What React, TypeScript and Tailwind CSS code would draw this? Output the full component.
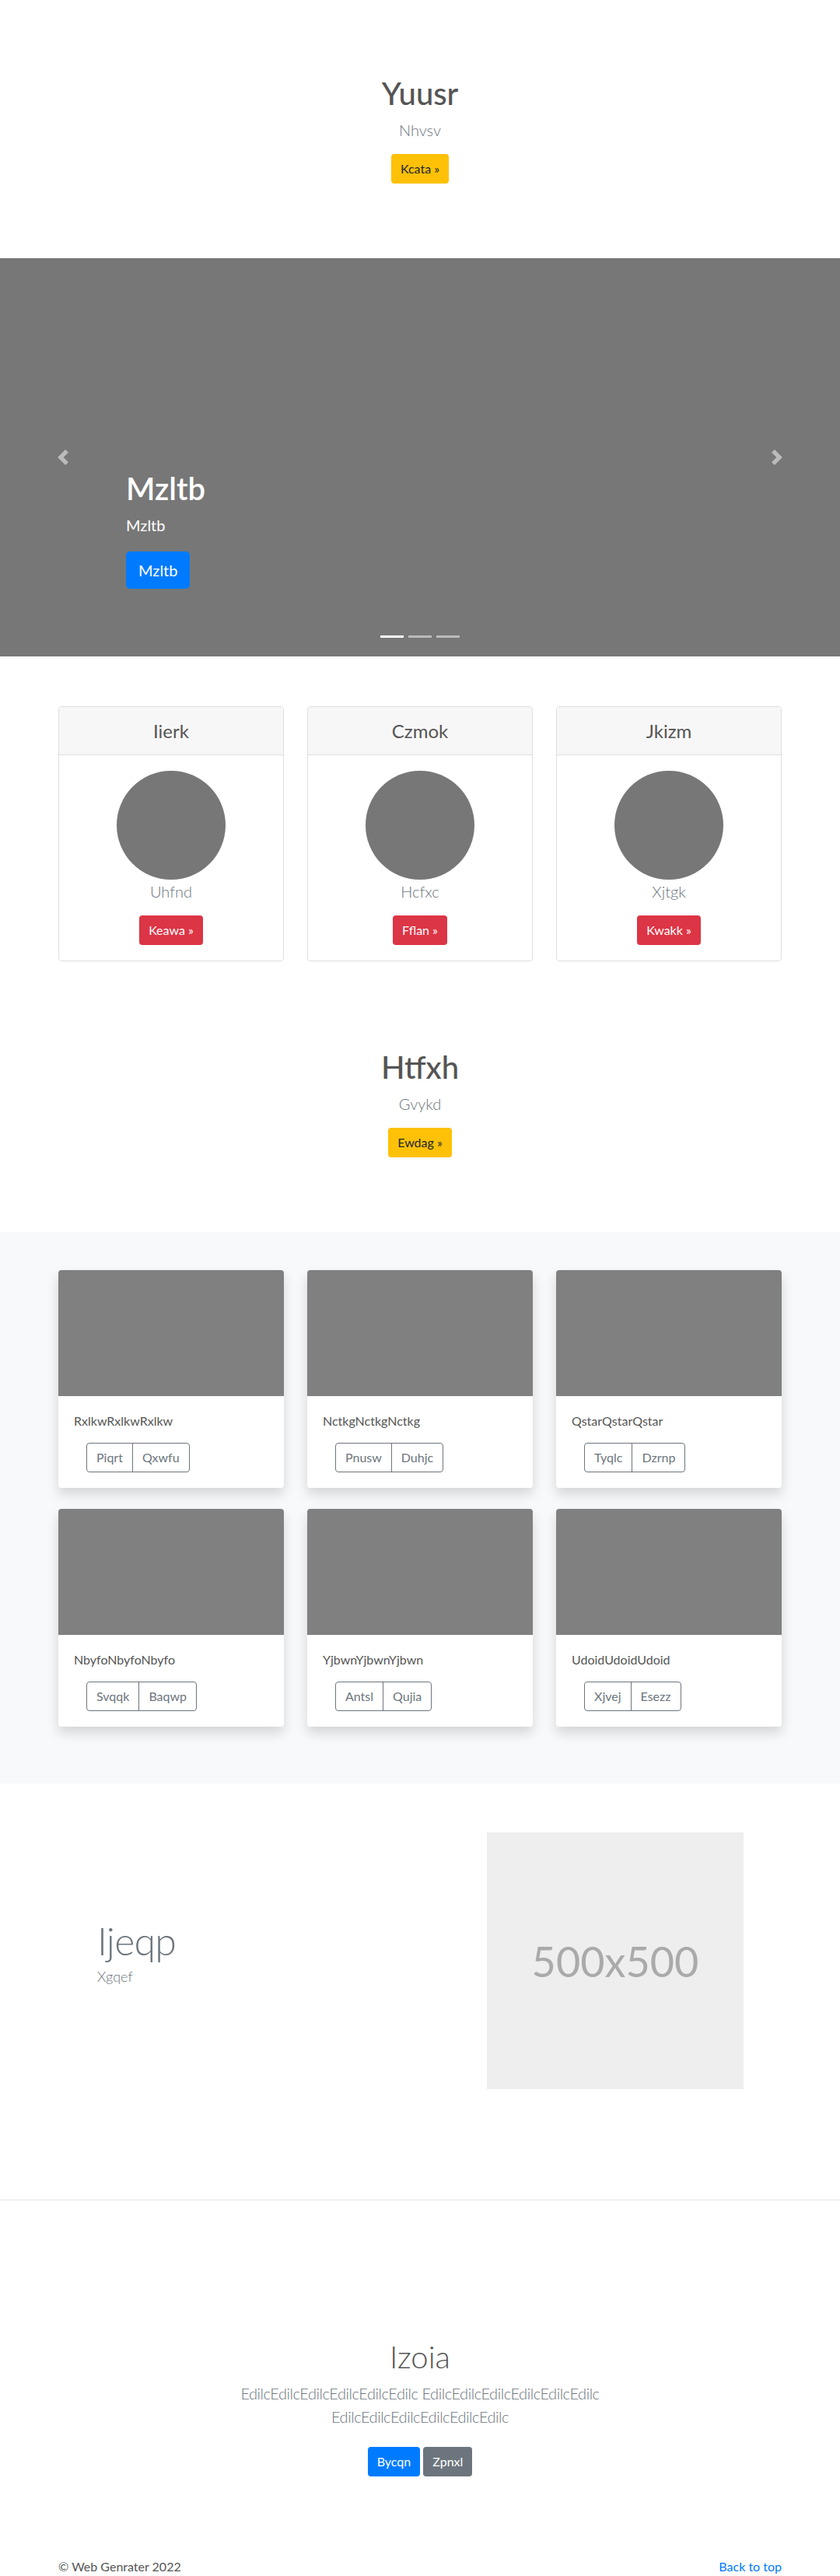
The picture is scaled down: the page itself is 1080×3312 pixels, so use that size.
import React from "react";

function Hero({ title, sub, btn }: { title: string; sub: string; btn: string }) {
  return (
    <section className="h-[332px] pt-24 text-center">
      <h1 className="text-[40px] leading-[48px] font-medium text-[#555]">{title}</h1>
      <p className="mt-2 text-[20px] leading-[30px] font-light text-[#6c757d]">{sub}</p>
      <button className="mt-4 h-[38px] px-3 rounded-[4px] bg-[#ffc107] text-[16px] text-[#212529]">
        {btn} »
      </button>
    </section>
  );
}

function Chevron({ dir }: { dir: "l" | "r" }) {
  return (
    <svg width="20" height="20" viewBox="0 0 8 8" className="opacity-50">
      {dir === "l" ? (
        <path fill="#fff" d="M5.25 0l-4 4 4 4 1.5-1.5L4.25 4l2.5-2.5L5.25 0z" />
      ) : (
        <path fill="#fff" d="M2.75 0l-1.5 1.5L3.75 4l-2.5 2.5L2.75 8l4-4-4-4z" />
      )}
    </svg>
  );
}

const pricing = [
  { h: "Iierk", t: "Uhfnd", b: "Keawa" },
  { h: "Czmok", t: "Hcfxc", b: "Fflan" },
  { h: "Jkizm", t: "Xjtgk", b: "Kwakk" },
];

const album = [
  { t: "RxlkwRxlkwRxlkw", a: "Piqrt", b: "Qxwfu" },
  { t: "NctkgNctkgNctkg", a: "Pnusw", b: "Duhjc" },
  { t: "QstarQstarQstar", a: "Tyqlc", b: "Dzrnp" },
  { t: "NbyfoNbyfoNbyfo", a: "Svqqk", b: "Baqwp" },
  { t: "YjbwnYjbwnYjbwn", a: "Antsl", b: "Qujia" },
  { t: "UdoidUdoidUdoid", a: "Xjvej", b: "Esezz" },
];

export default function App() {
  return (
    <div className="font-['Lato',sans-serif] text-[#555] bg-white w-[1080px]">
      <Hero title="Yuusr" sub="Nhvsv" btn="Kcata" />

      {/* Carousel */}
      <div className="relative h-[512px] bg-[#777]">
        <div className="absolute left-0 top-0 bottom-0 w-[15%] flex items-center justify-center">
          <Chevron dir="l" />
        </div>
        <div className="absolute right-0 top-0 bottom-0 w-[15%] flex items-center justify-center">
          <Chevron dir="r" />
        </div>
        <div className="absolute left-[162px] top-[272px] text-white">
          <h1 className="text-[40px] leading-[48px] font-semibold">Mzltb</h1>
          <p className="mt-2 text-[20px] leading-[30px]">Mzltb</p>
          <button className="mt-[19px] h-[48px] px-4 rounded-[5px] bg-[#007bff] text-[20px] text-white">
            Mzltb
          </button>
        </div>
        <div className="absolute left-0 right-0 top-[485px] flex justify-center gap-[6px]">
          <span className="block w-[30px] h-[3px] bg-white" />
          <span className="block w-[30px] h-[3px] bg-white/50" />
          <span className="block w-[30px] h-[3px] bg-white/50" />
        </div>
      </div>

      {/* Pricing-like cards */}
      <div className="mt-16 w-[930px] mx-auto flex gap-[30px]">
        {pricing.map((c) => (
          <div key={c.h} className="flex-1 border border-[#dfdfdf] rounded-[4px] overflow-hidden">
            <div className="h-[62px] bg-[#f7f7f7] border-b border-[#dfdfdf] flex items-center justify-center">
              <h4 className="text-[24px] leading-[29px] text-[#555]">{c.h}</h4>
            </div>
            <div className="pt-5 pb-5 flex flex-col items-center">
              <div className="w-[140px] h-[140px] rounded-full bg-[#777]" />
              <p className="text-[20px] leading-[30px] font-light text-[#6c757d]">{c.t}</p>
              <button className="mt-4 h-[38px] px-3 rounded-[4px] bg-[#dc3545] text-[16px] text-white">
                {c.b} »
              </button>
            </div>
          </div>
        ))}
      </div>

      <div className="mt-4">
        <Hero title="Htfxh" sub="Gvykd" btn="Ewdag" />
      </div>

      {/* Album */}
      <section className="bg-[#f8f9fa] pt-[49px] pb-[73px]">
        <div className="w-[930px] mx-auto grid grid-cols-3 gap-x-[30px] gap-y-[27px]">
          {album.map((c) => (
            <div
              key={c.t}
              className="bg-white rounded-[4px] overflow-hidden shadow-[0_8px_16px_rgba(0,0,0,0.15)]"
            >
              <div className="h-[162px] bg-[#808080]" />
              <div className="p-5">
                <p className="text-[16px] leading-[24px] text-[#555]">{c.t}</p>
                <div className="mt-4 ml-4 inline-flex h-[38px] border border-[#6c757d] rounded-[4px] text-[16px] text-[#6c757d]">
                  <span className="px-3 flex items-center border-r border-[#6c757d]">{c.a}</span>
                  <span className="px-3 flex items-center">{c.b}</span>
                </div>
              </div>
            </div>
          ))}
        </div>
      </section>

      {/* Featurette */}
      <section className="pt-[63px] pb-[142px] flex justify-between pl-[125px] pr-[124px]">
        <div className="pt-[114px]">
          <h2 className="text-[50px] leading-[50px] font-light tracking-[-0.8px] text-[#6c757d]">Ijeqp</h2>
          <p className="mt-2 text-[18px] leading-[27px] font-light text-[#6c757d]">Xgqef</p>
        </div>
        <div className="w-[330px] h-[330px] bg-[#eeeeee] flex items-center justify-center">
          <span className="text-[54px] text-[#aaaaaa]">500x500</span>
        </div>
      </section>

      {/* Final jumbotron */}
      <section className="border-t border-[#e5e5e5] pt-[177px] text-center">
        <h1 className="text-[40px] leading-[48px] font-light text-[#555]">Izoia</h1>
        <p className="mt-2 mx-auto max-w-[610px] text-[20px] leading-[30px] font-light tracking-[-0.45px] text-[#6c757d]">
          EdilcEdilcEdilcEdilcEdilcEdilc EdilcEdilcEdilcEdilcEdilcEdilc EdilcEdilcEdilcEdilcEdilcEdilc
        </p>
        <div className="mt-6 flex justify-center gap-1">
          <button className="h-[38px] px-3 rounded-[4px] bg-[#007bff] text-[16px] text-white">Bycqn</button>
          <button className="h-[38px] px-3 rounded-[4px] bg-[#6c757d] text-[16px] text-white">Zpnxl</button>
        </div>
      </section>

      <footer className="mt-[104px] w-[930px] mx-auto flex justify-between text-[16px] leading-[24px]">
        <span className="text-[#555]">© Web Genrater 2022</span>
        <span className="text-[#007bff]">Back to top</span>
      </footer>
    </div>
  );
}
